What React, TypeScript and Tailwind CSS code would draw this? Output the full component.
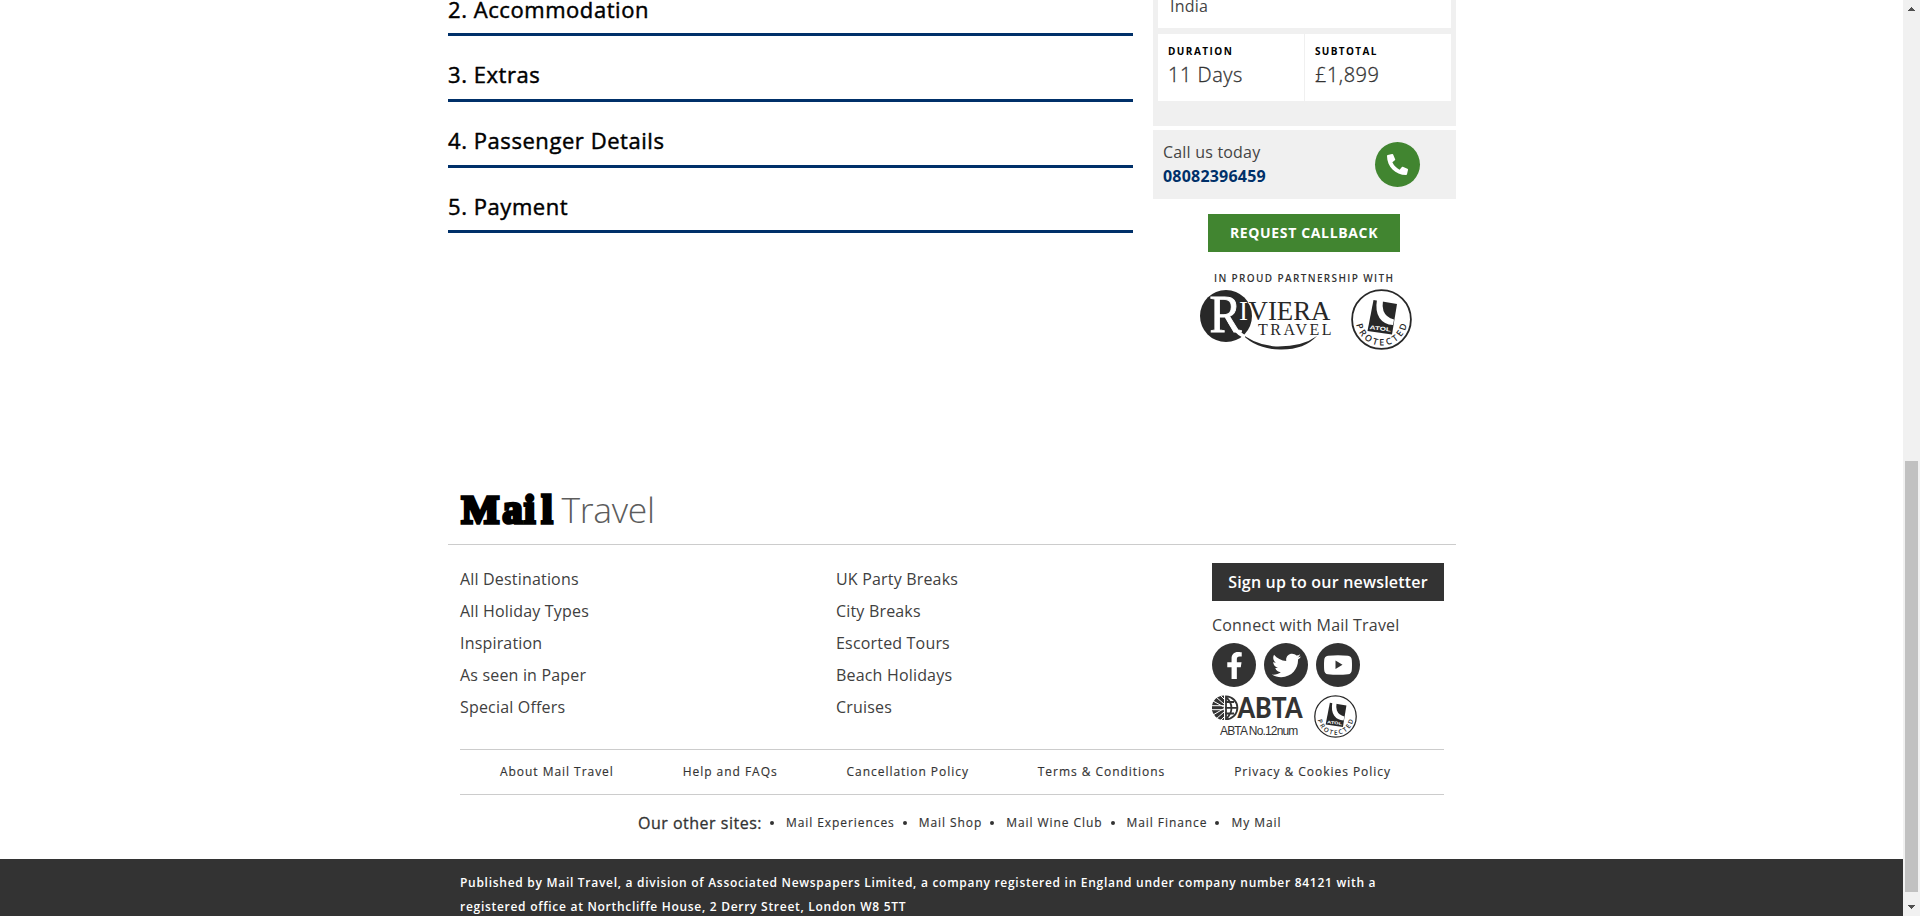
import { FaFacebookF, FaPhoneAlt, FaTwitter } from "react-icons/fa";

const steps = ["2. Accommodation", "3. Extras", "4. Passenger Details", "5. Payment"];
const stepBoxes = ["h-[36px] pb-[9px]", "h-[66px] pb-[10px]", "h-[66px] pb-[10px]", "h-[65px] pb-[9px]"];
const destinations = ["All Destinations", "All Holiday Types", "Inspiration", "As seen in Paper", "Special Offers"];
const breaks = ["UK Party Breaks", "City Breaks", "Escorted Tours", "Beach Holidays", "Cruises"];
const legal = ["About Mail Travel", "Help and FAQs", "Cancellation Policy", "Terms & Conditions", "Privacy & Cookies Policy"];
const sites = ["Mail Experiences", "Mail Shop", "Mail Wine Club", "Mail Finance", "My Mail"];

function RivieraLogo() {
  return (
    <svg className="block" width="132" height="62" viewBox="0 0 132 62" fontFamily="'Liberation Serif', serif" fill="#282828">
      <circle cx="26" cy="27" r="26" />
      <path d="M40 43 Q54 56 76 57.500 Q102 58 117 47 Q104 61 80 60.500 Q54 60 40 43Z" />
      <text x="9.500" y="42.500" fontSize="52" fill="#fff" stroke="#fff" strokeWidth="0.900" textLength="32" lengthAdjust="spacingAndGlyphs">R</text>
      <path d="M27 27 Q33 42 45 48" fill="none" stroke="#fff" strokeWidth="3.500" />
      <text x="39" y="31" fontSize="27" fill="#fff" stroke="#282828" strokeWidth="1" paintOrder="stroke">I</text>
      <text x="48.500" y="31" fontSize="27" stroke="#fff" strokeWidth="1.200" paintOrder="stroke" textLength="82" lengthAdjust="spacingAndGlyphs">VIERA</text>
      <text x="58" y="45.500" fontSize="16" textLength="73.500" lengthAdjust="spacing">TRAVEL</text>
    </svg>
  );
}

function AtolBadge({ size, id }: { size: number; id: string }) {
  return (
    <svg className="block" width={size} height={size} viewBox="0 0 61 61" fill="#282828">
      <circle cx="30.5" cy="30.5" r="29.400" fill="#fff" stroke="#282828" strokeWidth="1.800" />
      <path d="M22.500 11 L46 15 L41 45.500 L16.500 42Z" />
      <path d="M26 10.500 Q24 22 28.500 29 Q33 35.500 42 36 L43 30.500 Q35 28.500 32.500 22 Q31 17 32 11.500Z" fill="#fff" />
      <text x="18.500" y="40" fontFamily="'Liberation Sans', sans-serif" fontSize="5.500" fontWeight="700" fill="#fff" textLength="21.500" transform="rotate(7 18 40)" lengthAdjust="spacingAndGlyphs">ATOL</text>
      <path id={id} d="M4.900 34 A25.800 25.800 0 0 0 56.100 34" fill="none" />
      <text fontFamily="'Open Sans', sans-serif" fontSize="9" fontWeight="600">
        <textPath href={`#${id}`} startOffset="1.500" textLength="71">PROTECTED</textPath>
      </text>
    </svg>
  );
}

function MailLogo() {
  return (
    <svg className="block" width="200" height="36" viewBox="0 0 200 36">
      <text x="2.500 43.500 65 82.500" y="31.500" fontFamily="'Liberation Serif', serif" fontWeight="700" fontSize="40" fill="#000" stroke="#000" strokeWidth="3.400" strokeLinejoin="miter">Mail</text>
      <text x="102.500" y="32" fontFamily="'Open Sans', sans-serif" fontWeight="300" fontSize="35.500" fill="#5c5c5c" textLength="93.500" lengthAdjust="spacing">Travel</text>
    </svg>
  );
}

function AbtaLogo() {
  return (
    <svg className="block" width="92" height="26" viewBox="0 0 92 26" fill="#333">
      <path d="M12 0.500 A12 12 0 0 0 12 25Z" />
      <g stroke="#fff" strokeWidth="1" fill="none">
        <path d="M0 10.700H12M0 14.700H12M1 6L12 12M4 2L12 9M8 0L12 4M1 20L12 13.500M4 24L12 17M8 26L12 22" />
      </g>
      <g stroke="#333" strokeWidth="1.800" fill="none">
        <path d="M14 1.400 A11.300 11.300 0 0 1 14 24.200Z" />
        <path d="M14 2Q25 12.800 14 24M13 7H22M13 12.800H25M13 18.500H22" />
      </g>
      <text x="25.500" y="23" fontFamily="Lato, sans-serif" fontWeight="900" fontSize="28.500" textLength="65" lengthAdjust="spacingAndGlyphs">ABTA</text>
    </svg>
  );
}

function Scrollbar() {
  return (
    <div className="flex h-full w-[17px] flex-col items-center bg-[#f1f1f1]">
      <svg className="block shrink-0" width="17" height="17" shapeRendering="crispEdges"><path d="M5 11H12L8.500 7Z" fill="#505050" /></svg>
      <div className="mt-[444px] h-[431px] w-[13px] bg-[#c1c1c1]" />
      <svg className="mt-[7px] block shrink-0" width="17" height="17" shapeRendering="crispEdges"><path d="M5 6H12L8.500 10Z" fill="#505050" /></svg>
    </div>
  );
}

function LinkColumn({ items }: { items: string[] }) {
  return (
    <ul className="w-[376px]">
      {items.map((t) => <li key={t} className="h-8 leading-8">{t}</li>)}
    </ul>
  );
}

export default function App() {
  return (
    <div className="flex h-[916px] w-[1920px] overflow-hidden bg-white font-['Open_Sans',sans-serif] text-[#333]">
      <div className="h-full w-[1903px] overflow-hidden">
        <main className="ml-[448px] flex h-[482px] w-[1008px] justify-between">
          <section className="w-[685px]">
            {steps.map((t, i) => (
              <div key={t} className={`flex items-end border-b-[3px] border-[#003069] text-[22px] leading-[30px] tracking-[0.560px] text-black [-webkit-text-stroke:0.45px_black] ${stepBoxes[i]}`}>
                {t}
              </div>
            ))}
          </section>

          <aside className="w-[303px]">
            <div className="h-[126px] bg-[#f0f0f0] px-[5px]">
              <div className="flex h-[28px] items-end bg-white pb-[10px] pl-3 text-base leading-6 tracking-[0.2px] text-[#444]">India</div>
              <div className="mt-[6px] flex h-[67px] gap-px">
                <div className="w-[146px] bg-white pt-[10px] pl-[10px]">
                  <div className="text-[10px] leading-[14px] font-bold tracking-[1.450px] text-black">DURATION</div>
                  <div className="mt-[2px] text-[20px] leading-[30px] font-light tracking-[0.5px] [-webkit-text-stroke:0.3px_#333]">11 Days</div>
                </div>
                <div className="w-[146px] bg-white pt-[10px] pl-[10px]">
                  <div className="text-[10px] leading-[14px] font-bold tracking-[1.350px] text-black">SUBTOTAL</div>
                  <div className="mt-[2px] text-[20px] leading-[30px] font-light tracking-[0.5px] [-webkit-text-stroke:0.3px_#333]">£1,899</div>
                </div>
              </div>
            </div>
            <div className="mt-1 flex h-[69px] items-center justify-between bg-[#f0f0f0] pr-[36px] pl-[10px]">
              <div className="pb-[2px] leading-6">
                <div className="tracking-[0.2px] text-[#444]">Call us today</div>
                <div className="font-bold tracking-[0.2px] text-[#003069]">08082396459</div>
              </div>
              <div className="flex size-[45px] items-center justify-center rounded-full bg-[#418530] text-white">
                <FaPhoneAlt size={21} />
              </div>
            </div>
            <div className="mt-[15px] ml-[55px] flex h-[38px] w-[192px] items-center justify-center bg-[#418530] pb-[2px] text-[14px] font-bold tracking-[0.650px] text-white">REQUEST CALLBACK</div>
            <div className="mt-[19px] ml-[61px] text-[10px] leading-[14px] font-semibold tracking-[1.360px] whitespace-nowrap">IN PROUD PARTNERSHIP WITH</div>
            <div className="mt-1 ml-[47px] flex gap-[19px]">
              <RivieraLogo />
              <AtolBadge size={61} id="protected-large" />
            </div>
          </aside>
        </main>

        <footer>
          <div className="ml-[448px] w-[1008px]">
            <div className="h-[63px] border-b border-[#ccc] pt-[9px] pl-[11px]"><MailLogo /></div>
            <div className="mx-3 flex h-[205px] border-b border-[#ccc] pt-[18px]">
              <div className="flex w-[752px] tracking-[0.180px] text-[#404040]">
                <LinkColumn items={destinations} />
                <LinkColumn items={breaks} />
              </div>
              <div className="w-[232px]">
                <div className="flex h-[38px] items-center justify-center bg-[#333] font-semibold tracking-[0.2px] whitespace-nowrap text-white">Sign up to our newsletter</div>
                <div className="mt-3 h-[30px] leading-6 tracking-[0.2px] text-[#404040]">Connect with Mail Travel</div>
                <div className="flex gap-2 text-white">
                  <span className="flex size-11 items-center justify-center rounded-full bg-[#333]"><FaFacebookF size={27} /></span>
                  <span className="flex size-11 items-center justify-center rounded-full bg-[#333]"><FaTwitter size={29} /></span>
                  <span className="flex size-11 items-center justify-center rounded-full bg-[#333]">
                    <svg width="28" height="20" viewBox="0 0 28 20"><path d="M4 .7Q14-.3 24 .7Q27.500 1 27.800 5Q28.200 10 27.800 15Q27.500 19 24 19.300Q14 20.300 4 19.300Q.5 19 .2 15Q-.2 10 .2 5Q.5 1 4 .7Z" fill="#fff" /><path d="M11.500 5.500V14L18.500 9.800Z" fill="#333" /></svg>
                  </span>
                </div>
                <div className="mt-[8px] flex gap-[10px]">
                  <div className="w-[92px]">
                    <AbtaLogo />
                    <div className="mt-[2px] ml-2 font-['Liberation_Sans',sans-serif] text-[12px] leading-4 tracking-[-0.850px] whitespace-nowrap">ABTA No.12num</div>
                  </div>
                  <AtolBadge size={43} id="protected-small" />
                </div>
              </div>
            </div>
            <nav className="mx-3 flex h-[45px] items-center justify-between border-b border-[#ccc] pr-[53px] pl-10 text-[12px] tracking-[0.960px] [-webkit-text-stroke:0.15px_#333]">
              {legal.map((t) => <span key={t}>{t}</span>)}
            </nav>
            <div className="ml-[190px] flex h-[64px] items-center pb-[8px] text-[12px] tracking-[0.930px] whitespace-nowrap [-webkit-text-stroke:0.15px_#333]">
              <span className="text-[16px] tracking-[0.5px] [-webkit-text-stroke:0.3px_#333]">Our other sites:</span>
              {sites.map((t) => (
                <span key={t} className="ml-[8px] flex items-center">
                  <span className="mr-[12px] size-[4px] rounded-full bg-[#333]" />
                  {t}
                </span>
              ))}
            </div>
          </div>
          <div className="h-[57px] bg-[#333] pt-[12px] pl-[460px] text-[12px] leading-6 font-semibold tracking-[0.715px] whitespace-nowrap text-white">
            <div>Published by Mail Travel, a division of Associated Newspapers Limited, a company registered in England under company number 84121 with a</div>
            <div>registered office at Northcliffe House, 2 Derry Street, London W8 5TT</div>
          </div>
        </footer>
      </div>
      <Scrollbar />
    </div>
  );
}
